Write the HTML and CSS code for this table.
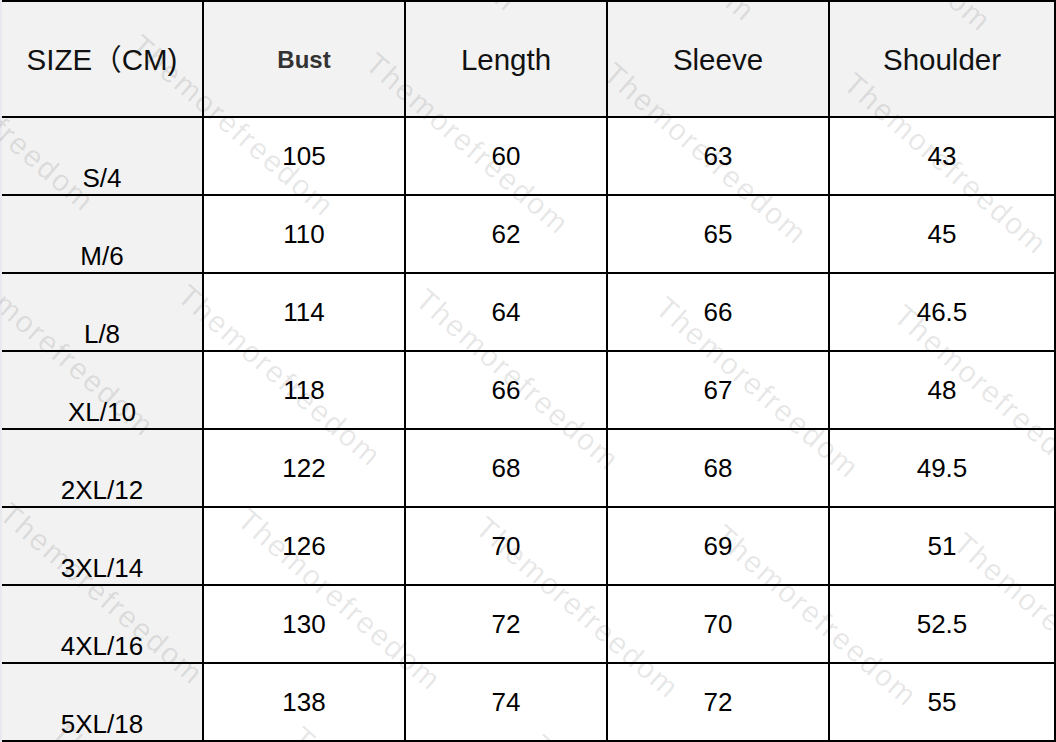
FILE: index.html
```html
<!DOCTYPE html>
<html>
<head>
<meta charset="utf-8">
<link rel="stylesheet" href="styles.css">
</head>
<body>
<div class="page">
  <div class="chart">
    <div class="cell head first">SIZE（CM)</div>
    <div class="cell head bust">Bust</div>
    <div class="cell head">Length</div>
    <div class="cell head">Sleeve</div>
    <div class="cell head">Shoulder</div>

    <div class="cell size">S/4</div><div class="cell">105</div><div class="cell">60</div><div class="cell">63</div><div class="cell">43</div>
    <div class="cell size">M/6</div><div class="cell">110</div><div class="cell">62</div><div class="cell">65</div><div class="cell">45</div>
    <div class="cell size">L/8</div><div class="cell">114</div><div class="cell">64</div><div class="cell">66</div><div class="cell">46.5</div>
    <div class="cell size">XL/10</div><div class="cell">118</div><div class="cell">66</div><div class="cell">67</div><div class="cell">48</div>
    <div class="cell size">2XL/12</div><div class="cell">122</div><div class="cell">68</div><div class="cell">68</div><div class="cell">49.5</div>
    <div class="cell size">3XL/14</div><div class="cell">126</div><div class="cell">70</div><div class="cell">69</div><div class="cell">51</div>
    <div class="cell size">4XL/16</div><div class="cell">130</div><div class="cell">72</div><div class="cell">70</div><div class="cell">52.5</div>
    <div class="cell size">5XL/18</div><div class="cell">138</div><div class="cell">74</div><div class="cell">72</div><div class="cell">55</div>
  </div>
  <div class="marks" aria-hidden="true">
    <span class="wm">Themorefreedom</span><span class="wm">Themorefreedom</span><span class="wm">Themorefreedom</span><span class="wm">Themorefreedom</span>
    <span class="wm">Themorefreedom</span><span class="wm">Themorefreedom</span><span class="wm">Themorefreedom</span><span class="wm">Themorefreedom</span><span class="wm">Themorefreedom</span>
    <span class="wm">Themorefreedom</span><span class="wm">Themorefreedom</span><span class="wm">Themorefreedom</span><span class="wm">Themorefreedom</span><span class="wm">Themorefreedom</span>
    <span class="wm">Themorefreedom</span><span class="wm">Themorefreedom</span><span class="wm">Themorefreedom</span><span class="wm">Themorefreedom</span><span class="wm">Themorefreedom</span>
    <span class="wm">Themorefreedom</span><span class="wm">Themorefreedom</span><span class="wm">Themorefreedom</span><span class="wm">Themorefreedom</span>
  </div>
</div>
</body>
</html>
```
FILE: styles.css
```css
html, body {
  margin: 0;
  padding: 0;
}
body {
  background: #e8e8ef;
  width: 1056px;
  height: 742px;
  overflow: hidden;
  font-family: "Liberation Sans", Arial, "Noto Sans CJK SC", sans-serif;
}
.page {
  position: relative;
  width: 1056px;
  height: 742px;
  padding-left: 2px;
  box-sizing: border-box;
}
.chart {
  display: grid;
  grid-template-columns: 200px 202px 202px 222px 226px;
  grid-template-rows: 114px repeat(8, 78px);
  border-top: 2px solid #000;
  border-right: 2px solid #000;
  border-bottom: 2px solid #000;
  background: #fff;
}
.cell {
  box-sizing: border-box;
  display: flex;
  align-items: center;
  justify-content: center;
  font-size: 26px;
  line-height: 30px;
  color: #000;
  border-left: 2px solid #000;
  border-top: 2px solid #000;
  background: #fff;
}
.head {
  border-top: none;
  background: #f2f2f2;
  color: #111;
  font-size: 29.5px;
  line-height: 34px;
  padding-top: 2px;
}
.first, .size {
  border-left: none;
  background: #f2f2f2;
}
.size {
  align-items: flex-end;
  padding-bottom: 1px;
}
.bust {
  font-weight: bold;
  font-size: 24px;
  color: #333;
}
.marks {
  position: absolute;
  left: 0;
  top: 0;
  width: 1056px;
  height: 742px;
  overflow: hidden;
  pointer-events: none;
}
.wm {
  position: absolute;
  transform-origin: 0 0;
  transform: rotate(41deg);
  font-size: 30px;
  letter-spacing: 2px;
  line-height: 1;
  white-space: nowrap;
  color: rgba(0, 0, 0, 0.1);
}
.wm:nth-child(1) { left: 90px; top: -185px; }
.wm:nth-child(2) { left: 328px; top: -175px; }
.wm:nth-child(3) { left: 566px; top: -165px; }
.wm:nth-child(4) { left: 802px; top: -155px; }
.wm:nth-child(5) { left: -95px; top: 25px; }
.wm:nth-child(6) { left: 145px; top: 30px; }
.wm:nth-child(7) { left: 380px; top: 48px; }
.wm:nth-child(8) { left: 618px; top: 58px; }
.wm:nth-child(9) { left: 858px; top: 68px; }
.wm:nth-child(10) { left: -35px; top: 250px; }
.wm:nth-child(11) { left: 192px; top: 280px; }
.wm:nth-child(12) { left: 430px; top: 284px; }
.wm:nth-child(13) { left: 670px; top: 292px; }
.wm:nth-child(14) { left: 908px; top: 300px; }
.wm:nth-child(15) { left: 14px; top: 498px; }
.wm:nth-child(16) { left: 252px; top: 504px; }
.wm:nth-child(17) { left: 490px; top: 512px; }
.wm:nth-child(18) { left: 728px; top: 520px; }
.wm:nth-child(19) { left: 968px; top: 528px; }
.wm:nth-child(20) { left: 66px; top: 716px; }
.wm:nth-child(21) { left: 306px; top: 722px; }
.wm:nth-child(22) { left: 546px; top: 730px; }
.wm:nth-child(23) { left: 784px; top: 736px; }
```
